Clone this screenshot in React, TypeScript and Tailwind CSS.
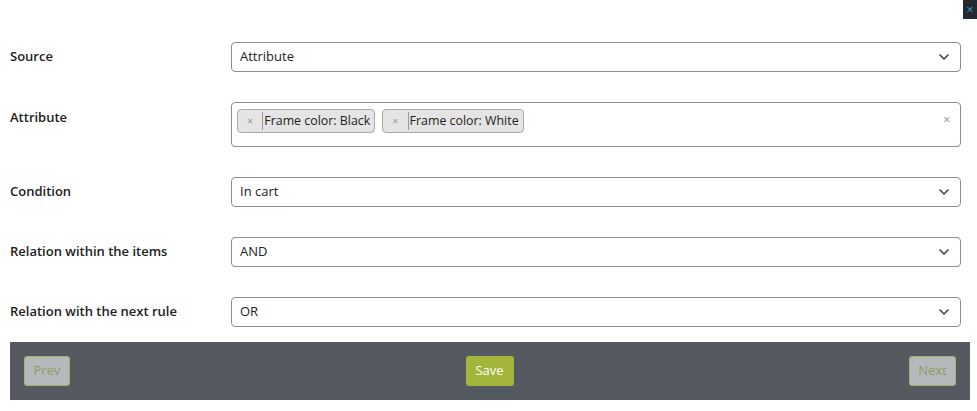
import { ChevronDown } from "lucide-react";

const font = { fontFamily: "'Open Sans', 'Noto Sans', sans-serif" };

function SelectBox({ value }: { value: string }) {
  return (
    <div className="flex h-[30px] w-[730px] items-center justify-between rounded-[4px] border border-[#8d8d8d] bg-white pl-[8px] pr-[8px]">
      <span className="text-[13px] text-[#222]">{value}</span>
      <ChevronDown size={16} strokeWidth={2.5} className="text-[#444]" />
    </div>
  );
}

function Tag({ label }: { label: string }) {
  return (
    <div className="flex h-[24px] items-center rounded-[4px] border border-[#aaa] bg-[#e4e4e4] text-[12.4px] text-[#222]">
      <span className="pl-[9px] pr-[9px] text-[11px] text-[#999]">×</span>
      <span className="h-[18px] border-l border-[#999]" />
      <span className="pl-[1px] pr-[4px]">{label}</span>
    </div>
  );
}

function Row({
  label,
  top = false,
  children,
}: {
  label: string;
  top?: boolean;
  children: React.ReactNode;
}) {
  return (
    <div className={top ? "flex items-start" : "flex items-center"}>
      <div
        className={
          top
            ? "w-[221px] pt-[6px] text-[13px] font-semibold text-[#222]"
            : "w-[221px] text-[13px] font-semibold text-[#222]"
        }
      >
        {label}
      </div>
      {children}
    </div>
  );
}

export default function App() {
  return (
    <div className="relative h-[411px] w-[977px] bg-white" style={font}>
      <div className="absolute right-0 top-0 flex h-[19px] w-[14px] items-center justify-center bg-[#23292e] text-[13px] leading-none text-[#3b8fd0]">
        ×
      </div>
      <div className="flex flex-col pl-[10px] pt-[42px]">
        <Row label="Source">
          <SelectBox value="Attribute" />
        </Row>
        <div className="mt-[30px]">
          <Row label="Attribute" top>
            <div className="flex h-[45px] w-[730px] items-start justify-between rounded-[4px] border border-[#8d8d8d] bg-white pl-[5px] pr-[10px] pt-[6px]">
              <div className="flex gap-[7px]">
                <Tag label="Frame color: Black" />
                <Tag label="Frame color: White" />
              </div>
              <span className="pt-[2px] text-[12px] text-[#888]">×</span>
            </div>
          </Row>
        </div>
        <div className="mt-[30px]">
          <Row label="Condition">
            <SelectBox value="In cart" />
          </Row>
        </div>
        <div className="mt-[30px]">
          <Row label="Relation within the items">
            <SelectBox value="AND" />
          </Row>
        </div>
        <div className="mt-[30px]">
          <Row label="Relation with the next rule">
            <SelectBox value="OR" />
          </Row>
        </div>
        <div className="mt-[15px] flex h-[58px] w-[960px] items-center justify-between bg-[#545a60] px-[14px]">
          <button className="h-[30px] w-[46px] rounded-[3px] border border-[#a3b36b] bg-[#b6b9bc] text-[13px] text-[#8e9c5c]">
            Prev
          </button>
          <button className="h-[30px] w-[48px] rounded-[3px] bg-[#a3b53a] text-[13px] text-white">
            Save
          </button>
          <button className="h-[30px] w-[47px] rounded-[3px] border border-[#a3b36b] bg-[#b6b9bc] text-[13px] text-[#8e9c5c]">
            Next
          </button>
        </div>
      </div>
    </div>
  );
}
